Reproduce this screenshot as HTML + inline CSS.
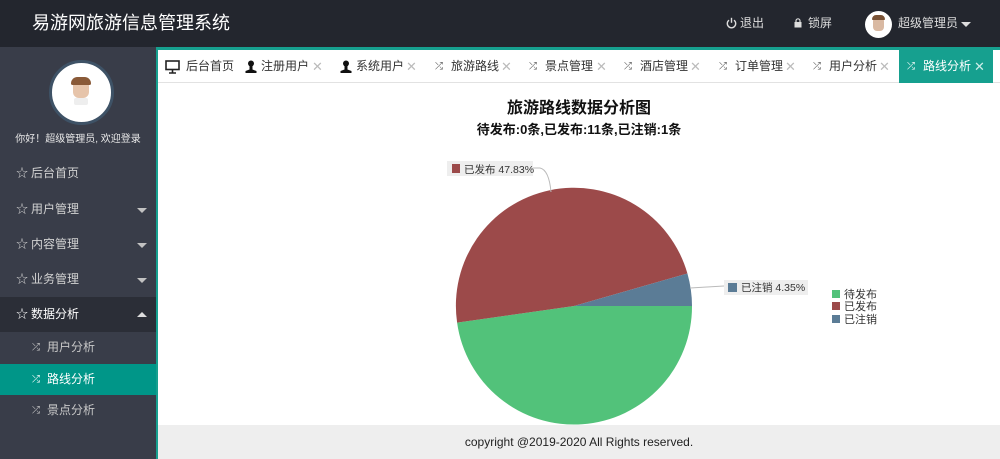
<!DOCTYPE html><html><head><meta charset="utf-8"><style>
*{margin:0;padding:0;box-sizing:border-box}
body{width:1000px;height:459px;overflow:hidden;position:relative;background:#fff;font-family:"Liberation Sans","Noto Sans CJK SC",sans-serif;font-size:13px}
.a{position:absolute}
#hd{left:0;top:0;width:1000px;height:47px;background:#23262e}
#sb{left:0;top:47px;width:156px;height:412px;background:#393d49}
.mi{position:absolute;left:0;width:156px;height:35px;line-height:35px;color:#d2d2d2;padding-left:31px;font-size:12px}
.st{position:absolute;left:16px;top:0;font-size:12px}
.car{position:absolute;right:9px;top:16px;width:0;height:0;border-left:5px solid transparent;border-right:5px solid transparent;border-top:5px solid #c2c2c2}
.sub{position:absolute;left:0;width:156px;height:31px;line-height:31px;color:#c8c8c8;padding-left:47px;font-size:12px}
.sub i{position:absolute;left:32px;font-style:normal;font-size:10px}
.tab{position:absolute;top:50px;height:33px;line-height:33px;color:#333;font-size:12px;white-space:nowrap}
.ic{position:absolute;top:50px;height:33px;line-height:33px;color:#555;font-size:10px}
.x{position:absolute;top:50px;height:33px;line-height:33px;color:#bbb;font-size:13px}
</style></head><body>
<div id="hd" class="a"></div>
<div class="a" style="left:32px;top:11px;color:#fff;font-size:18px;line-height:24px">易游网旅游信息管理系统</div>
<svg class="a" style="left:726px;top:17px" width="11" height="12" viewBox="0 0 11 12"><path d="M3 3.2A4.2 4.2 0 1 0 8 3.2" fill="none" stroke="#ddd" stroke-width="1.4"/><path d="M5.5 0.8v5" stroke="#ddd" stroke-width="1.4"/></svg>
<div class="a" style="left:740px;top:15px;color:#ddd;font-size:12px;line-height:17px">退出</div>
<svg class="a" style="left:794px;top:18px" width="8" height="10" viewBox="0 0 8 10"><path d="M2 4V2.8a2 2 0 0 1 4 0V4" fill="none" stroke="#ddd" stroke-width="1.2"/><rect x="0.5" y="4" width="7" height="5.5" fill="#ddd"/></svg>
<div class="a" style="left:808px;top:15px;color:#ddd;font-size:12px;line-height:17px">锁屏</div>
<div class="a" style="left:865px;top:11px;width:27px;height:27px;border-radius:50%;background:#fff"></div>
<div class="a" style="left:873px;top:17px;width:11px;height:14px;border-radius:4px;background:#d9b9a2"></div>
<div class="a" style="left:872px;top:15px;width:13px;height:5px;border-radius:5px 5px 1px 1px;background:#7a5336"></div>
<div class="a" style="left:898px;top:15px;color:#ddd;font-size:12px;line-height:17px">超级管理员</div>
<div class="a" style="left:961px;top:22px;border-left:5px solid transparent;border-right:5px solid transparent;border-top:5px solid #ddd"></div>

<div id="sb" class="a"></div>
<div class="a" style="left:49px;top:60px;width:65px;height:65px;border-radius:50%;background:#fff;border:3px solid #3e5266"></div>
<div class="a" style="left:73px;top:80px;width:16px;height:18px;border-radius:6px;background:#e6c4aa"></div>
<div class="a" style="left:71px;top:77px;width:20px;height:8px;border-radius:8px 8px 2px 2px;background:#8a5a38"></div>
<div class="a" style="left:74px;top:98px;width:14px;height:7px;background:#eee;border-radius:2px"></div>
<div class="a" style="left:0;top:133px;width:156px;text-align:center;color:#e8e8e8;font-size:10px;line-height:14px">你好！超级管理员, 欢迎登录</div>
<div class="mi" style="top:156px"><span class="st">☆</span>后台首页</div>
<div class="mi" style="top:192px"><span class="st">☆</span>用户管理<i class="car"></i></div>
<div class="mi" style="top:227px"><span class="st">☆</span>内容管理<i class="car"></i></div>
<div class="mi" style="top:262px"><span class="st">☆</span>业务管理<i class="car"></i></div>
<div class="mi" style="top:297px;background:#2b2e37;color:#fff"><span class="st">☆</span>数据分析<i class="car" style="border-top:0;border-bottom:5px solid #ddd;top:15px"></i></div>
<div class="sub" style="top:332px"><i>⤮</i>用户分析</div>
<div class="sub" style="top:364px;background:#009688;color:#fff"><i>⤮</i>路线分析</div>
<div class="sub" style="top:395px"><i>⤮</i>景点分析</div>

<div class="a" style="left:156px;top:47px;width:844px;height:3px;background:#16a08f"></div>
<div class="a" style="left:156px;top:47px;width:2px;height:412px;background:#16a08f"></div>
<div class="a" style="left:158px;top:82px;width:842px;height:1px;background:#e2e2e2"></div>
<div class="a" style="left:899px;top:50px;width:94px;height:33px;background:#16a08f"></div>
<svg class="a" style="left:165px;top:60px" width="15" height="14" viewBox="0 0 15 14"><rect x="1" y="1" width="13" height="8.5" fill="none" stroke="#222" stroke-width="1.6"/><path d="M7.5 10v2.5M4 13h7" stroke="#222" stroke-width="1.6"/></svg>
<div class="tab" style="left:186px">后台首页</div>
<svg class="a" style="left:245px;top:60px" width="12" height="13" viewBox="0 0 12 13"><circle cx="6" cy="3.5" r="3" fill="#111"/><path d="M4.5 6h3v3.5l4 1.5v2H0.5v-2l4-1.5z" fill="#111"/></svg>
<div class="tab" style="left:261px">注册用户</div><div class="x" style="left:312px">✕</div>
<svg class="a" style="left:340px;top:60px" width="12" height="13" viewBox="0 0 12 13"><circle cx="6" cy="3.5" r="3" fill="#111"/><path d="M4.5 6h3v3.5l4 1.5v2H0.5v-2l4-1.5z" fill="#111"/></svg>
<div class="tab" style="left:356px">系统用户</div><div class="x" style="left:406px">✕</div>
<div class="ic" style="left:435px">⤮</div><div class="tab" style="left:451px">旅游路线</div><div class="x" style="left:501px">✕</div>
<div class="ic" style="left:529px">⤮</div><div class="tab" style="left:545px">景点管理</div><div class="x" style="left:596px">✕</div>
<div class="ic" style="left:624px">⤮</div><div class="tab" style="left:640px">酒店管理</div><div class="x" style="left:690px">✕</div>
<div class="ic" style="left:719px">⤮</div><div class="tab" style="left:735px">订单管理</div><div class="x" style="left:785px">✕</div>
<div class="ic" style="left:813px">⤮</div><div class="tab" style="left:829px">用户分析</div><div class="x" style="left:879px">✕</div>
<div class="ic" style="left:907px;color:#fff">⤮</div><div class="tab" style="left:923px;color:#fff">路线分析</div><div class="x" style="left:974px;color:#cdeee9">✕</div>

<div class="a" style="left:158px;top:99px;width:842px;text-align:center;font-weight:bold;font-size:16px;line-height:20px;color:#111">旅游路线数据分析图</div>
<div class="a" style="left:158px;top:121px;width:842px;text-align:center;font-weight:bold;font-size:13px;line-height:17px;color:#111">待发布:0条,已发布:11条,已注销:1条</div>

<svg class="a" style="left:158px;top:83px" width="842" height="342" viewBox="158 83 842 342">
<path d="M574 306 L692 306 A118 118 0 0 1 457.1 322.6 Z" fill="#52c27a"/>
<path d="M574 306 L457.1 322.6 A118 118 0 0 1 687.4 273.5 Z" fill="#9c4a4a"/>
<path d="M574 306 L687.4 273.5 A118 118 0 0 1 692 306 Z" fill="#5b7c96"/>
<path d="M551 192 Q549 170 540 168 L532 168" fill="none" stroke="#bbb"/>
<path d="M690 288 L724 286" fill="none" stroke="#bbb"/>
<rect x="447" y="161" width="86" height="15" fill="#eee"/>
<rect x="452" y="164" width="8" height="9" fill="#9c4a4a"/>
<text x="464" y="173" font-size="10.5" fill="#333" font-family="Liberation Sans,Noto Sans CJK SC,sans-serif">已发布 47.83%</text>
<rect x="724" y="280" width="84" height="15" fill="#eee"/>
<rect x="728" y="283" width="9" height="9" fill="#5b7c96"/>
<text x="741" y="291" font-size="10.5" fill="#333" font-family="Liberation Sans,Noto Sans CJK SC,sans-serif">已注销 4.35%</text>
<rect x="832" y="290" width="8" height="8" fill="#52c27a"/>
<rect x="832" y="302" width="8" height="8" fill="#9c4a4a"/>
<rect x="832" y="315" width="8" height="8" fill="#5b7c96"/>
<text font-size="11" fill="#333" font-family="Liberation Sans,Noto Sans CJK SC,sans-serif"><tspan x="844" y="298">待发布</tspan><tspan x="844" y="310">已发布</tspan><tspan x="844" y="323">已注销</tspan></text>
</svg>

<div class="a" style="left:158px;top:425px;width:842px;height:34px;background:#eee;text-align:center;line-height:34px;color:#222;font-size:12px">copyright @2019-2020 All Rights reserved.</div>
</body></html>
